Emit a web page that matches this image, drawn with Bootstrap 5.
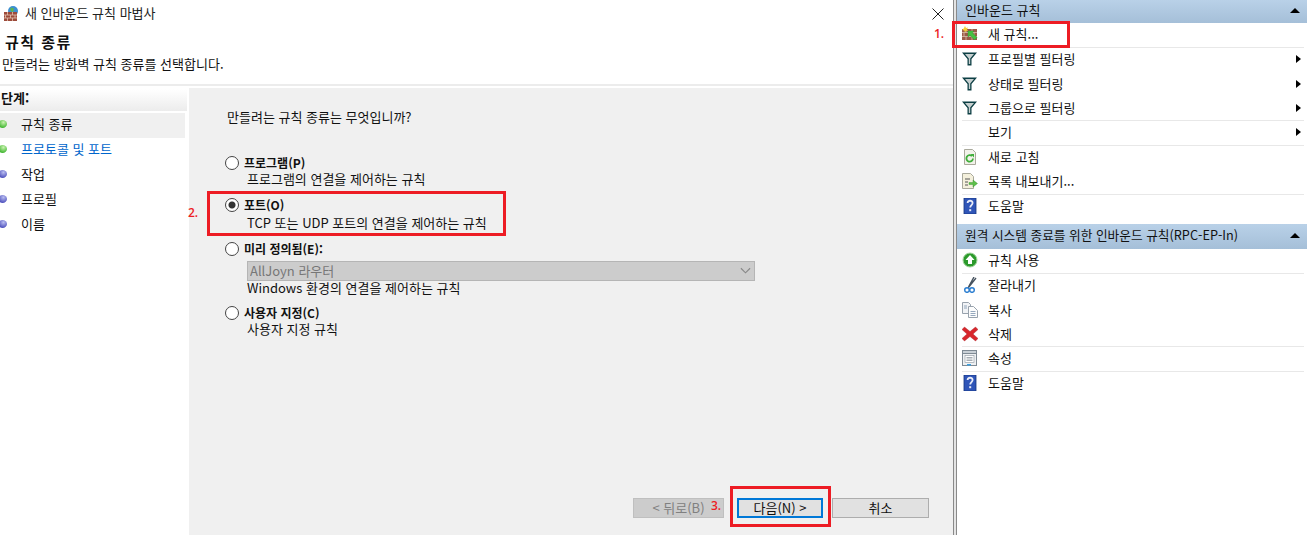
<!DOCTYPE html>
<html lang="ko">
  <head>
    <meta charset="UTF-8" />
    <meta name="viewport" content="width=device-width, initial-scale=1.0" />
    <title>새 인바운드 규칙 마법사</title>
    <link href="https://cdn.jsdelivr.net/npm/bootstrap@5.3.3/dist/css/bootstrap.min.css" rel="stylesheet" />
    <style>
      html, body { height: 535px; overflow: hidden; }
      body { font-family: "Noto Sans CJK KR", "Liberation Sans", sans-serif; font-size: 13px; line-height: 16px; color: #111; background: #fff; }
      .shell { width: 1307px; height: 535px; position: relative; }

      .wizard { width: 953px; }
      .title-row { height: 28px; padding-left: 3px; }
      .title-text { margin-left: 6px; margin-bottom: 2px; color: #222; }
      .close-x { margin-right: 9px; }
      .head-box { height: 58px; border-bottom: 2px solid #ececec; }
      .head-title { font-size: 15px; letter-spacing: 1.5px; font-weight: 700; line-height: 18px; padding: 5px 0 0 5px; }
      .head-sub { padding: 5px 0 0 2px; }

      .steps { width: 189px; padding-top: 3px; border-right: 2px solid #fff; }
      .steps-title { height: 22px; width: 187px; font-weight: 700; font-size: 13px; line-height: 18px; padding-left: 1px; background: linear-gradient(#fff, #ececec); margin-bottom: 2px; }
      .step-row { height: 25px; width: 185px; padding-left: 21px; padding-bottom: 4px; }
      .step-row.current { background: #f0f0f0; }
      .step-row.linked { color: #0066cc; }
      .step-dot { width: 9px; height: 8px; border-radius: 50%; margin-left: -23px; margin-right: 14px; flex: none; }
      .dot-green { background: radial-gradient(circle at 60% 30%, #c9f2b0, #3fb52f 70%); }
      .dot-blue { background: radial-gradient(circle at 60% 30%, #b9bdf0, #4d50bd 70%); }

      .main-pane { background: #f0f0f0; margin-top: 2px; padding: 21px 0 0 36px; width: 764px; height: 447px; }
      .ask { padding-left: 2px; margin-bottom: 30px; }
      .opt-line { height: 16px; }
      .opt-line .form-check-input { width: 14px; height: 14px; margin: 0 5px 0 0; flex: none; border: 1px solid #444; border-radius: 50%; background-color: #fff; box-shadow: none; }
      .opt-line .form-check-input:checked { background-color: #fff; background-image: radial-gradient(circle, #333 0 3px, transparent 4px); border-color: #444; }
      .opt-label { font-weight: 700; font-size: 12px; }
      .opt-desc { padding-left: 22px; height: 16px; }
      .desc-low { margin-top: 2px; }
      .desc-tight { margin-top: -1px; }
      .opt-gap { height: 10px; }
      .opt-gap-last { height: 9px; }
      .preset-select { width: 508px; height: 20px; margin: 4px 0 0 22px; padding: 0 6px 0 2px; font-size: 13px; line-height: 18px; border-radius: 0; border: 1px solid #b5b5b5; color: #777; font-family: inherit; background-image: url("data:image/svg+xml,%3csvg xmlns='http://www.w3.org/2000/svg' viewBox='0 0 12 8'%3e%3cpath d='M1 1l5 5 5-5' fill='none' stroke='%23888' stroke-width='1.2'/%3e%3c/svg%3e"); background-position: right 3px center; background-size: 11px 8px; }
      .preset-select:disabled { background-color: #ccc; color: #777; }

      .wiz-btns { position: absolute; left: 633px; top: 498px; }
      .wiz-btn { height: 20px; padding: 0; font-size: 13px; line-height: 16px; border-radius: 0; color: #111; background: #e1e1e1; border: 1px solid #adadad; font-family: inherit; }
      .wiz-btn:disabled { background: #ccc; color: #808080; border-color: #bfbfbf; opacity: 1; }
      .btn-back { width: 91px; }
      .btn-next { width: 86px; margin-left: 13px; border: 2px solid #0078d7; }
      .btn-cancel { width: 97px; margin-left: 9px; }

      .splitter { width: 4px; border-left: 1px solid #8a8a8a; border-right: 1px solid #8a8a8a; background: #e4e4e4; }

      .actions { width: 350px; }
      .act-head { height: 23px; padding: 0 7px 3px 8px; background: linear-gradient(#b9d1e8, #a5bfd8); color: #111; }
      .act-head.second { height: 25px; margin-top: 5px; font-size: 12.7px; }
      .act-list { padding-left: 5px; padding-right: 3px; }
      .act-row { height: 24.5px; padding-bottom: 1px; }
      .act-row.sep { border-bottom: 1px solid #e8e8e8; }
      .act-icon { width: 16px; height: 16px; margin-right: 10px; flex: none; }
      .act-text { flex-grow: 1; }
      .tri-right { width: 0; height: 0; border-left: 5px solid #000; border-top: 4px solid transparent; border-bottom: 4px solid transparent; margin-right: 3px; }
      .tri-up { width: 0; height: 0; border-bottom: 5px solid #000; border-left: 5px solid transparent; border-right: 5px solid transparent; }

      .mark-box { position: absolute; border: 3px solid #ed1c24; }
      .mark-num { position: absolute; color: #ed1c24; font-family: "Open Sans", sans-serif; font-weight: 600; font-size: 12px; line-height: 12px; }
      .box-one { left: 952px; top: 21px; width: 118px; height: 27px; }
      .box-two { left: 207px; top: 191px; width: 299px; height: 45px; }
      .box-three { left: 730px; top: 486px; width: 101px; height: 41px; }
      .num-one { left: 934px; top: 28px; }
      .num-two { left: 188px; top: 207px; }
      .num-three { left: 711px; top: 500px; }
    </style>
  </head>
  <body>
    <svg width="0" height="0" class="d-block">
      <defs>
        <symbol id="ico-funnel" viewBox="0 0 16 16">
          <path d="M0 1.500h15L9.500 8v6.500h-4V8z" fill="#0d3f44" />
          <path d="M3 3h9L8.200 7.600V13H6.800V7.600z" fill="#c7d0d0" />
        </symbol>
        <symbol id="ico-help" viewBox="0 0 16 16">
          <rect x="2" y="0" width="12" height="16" fill="#2f55b8" stroke="#16357f" stroke-width=".8" />
          <path d="M5.600 5c0-3 5-3 5 0 0 2-2.400 2.200-2.400 4.600" fill="none" stroke="#e8ecf8" stroke-width="1.800" />
          <rect x="7.200" y="11.200" width="2" height="2" fill="#e8ecf8" />
        </symbol>
      </defs>
    </svg>

    <div class="shell d-flex">
      <div class="wizard d-flex flex-column">
        <div class="title-row d-flex align-items-center">
          <svg width="16" height="16" viewBox="0 0 16 16">
            <circle cx="10" cy="5" r="5" fill="#3c8fd0" />
            <path d="M7.500 1.500l3.500 1-1 3.500-2.500-1z" fill="#5fb64a" />
            <rect x="1" y="6" width="13" height="9" fill="#9c4a3a" />
            <path d="M1 9h13M1 12h13M4.500 6v3M9.500 6v3M2.500 9v3M7.500 9v3M12 9v3M4.500 12v3M9.500 12v3" stroke="#e3c3b0" stroke-width=".8" fill="none" />
          </svg>
          <span class="title-text flex-grow-1">새 인바운드 규칙 마법사</span>
          <svg class="close-x" width="12" height="12" viewBox="0 0 12 12"><path d="M.5.5l11 11M11.500.5l-11 11" stroke="#222" stroke-width="1" fill="none" /></svg>
        </div>
        <div class="head-box">
          <div class="head-title">규칙 종류</div>
          <div class="head-sub">만들려는 방화벽 규칙 종류를 선택합니다.</div>
        </div>
        <div class="d-flex flex-grow-1">
          <div class="steps">
            <div class="steps-title">단계:</div>
            <div class="step-row current d-flex align-items-center"><span class="step-dot dot-green"></span>규칙 종류</div>
            <div class="step-row linked d-flex align-items-center"><span class="step-dot dot-green"></span>프로토콜 및 포트</div>
            <div class="step-row d-flex align-items-center"><span class="step-dot dot-blue"></span>작업</div>
            <div class="step-row d-flex align-items-center"><span class="step-dot dot-blue"></span>프로필</div>
            <div class="step-row d-flex align-items-center"><span class="step-dot dot-blue"></span>이름</div>
          </div>
          <div class="main-pane">
            <div class="ask">만들려는 규칙 종류는 무엇입니까?</div>
            <div>
              <div class="opt-line d-flex align-items-center"><input class="form-check-input" type="radio" name="ruleType" /><span class="opt-label">프로그램(P)</span></div>
              <div class="opt-desc">프로그램의 연결을 제어하는 규칙</div>
            </div>
            <div class="opt-gap"></div>
            <div>
              <div class="opt-line d-flex align-items-center"><input class="form-check-input" type="radio" name="ruleType" checked /><span class="opt-label">포트(O)</span></div>
              <div class="opt-desc desc-low">TCP 또는 UDP 포트의 연결을 제어하는 규칙</div>
            </div>
            <div class="opt-gap"></div>
            <div>
              <div class="opt-line d-flex align-items-center"><input class="form-check-input" type="radio" name="ruleType" /><span class="opt-label">미리 정의됨(E):</span></div>
              <select class="form-select preset-select d-block" disabled><option>AllJoyn 라우터</option></select>
              <div class="opt-desc desc-tight">Windows 환경의 연결을 제어하는 규칙</div>
            </div>
            <div class="opt-gap-last"></div>
            <div>
              <div class="opt-line d-flex align-items-center"><input class="form-check-input" type="radio" name="ruleType" /><span class="opt-label">사용자 지정(C)</span></div>
              <div class="opt-desc">사용자 지정 규칙</div>
            </div>
          </div>
        </div>
      </div>

      <div class="splitter"></div>

      <div class="actions">
        <div class="act-head d-flex align-items-center justify-content-between"><span>인바운드 규칙</span><span class="tri-up"></span></div>
        <div class="act-list">
          <div class="act-row sep d-flex align-items-center">
            <svg class="act-icon" viewBox="0 0 16 16">
              <rect x="0" y="3" width="15" height="11" fill="#9a5a48" />
              <path d="M0 6.500h15M0 10.500h15M4 3v3.500M10 3v3.500M2 6.500v4M7 6.500v4M12 6.500v4M4 10.500v3.500M10 10.500v3.500" stroke="#d9c0ae" stroke-width=".8" fill="none" />
              <path d="M3 0l1 2 2-.5-1 2 1 1.500-2-.2-1 1.700-.7-1.900L0 4l1.500-1.200z" fill="#f5cf3a" />
              <path d="M6 5h6l-1.500 1.800 4.500 4.700-2.500 2.500-4.500-4.700L6 11z" fill="#45c040" stroke="#2a8f30" stroke-width=".4" />
            </svg>
            <span class="act-text">새 규칙...</span>
          </div>
          <div class="act-row d-flex align-items-center"><svg class="act-icon"><use href="#ico-funnel" /></svg><span class="act-text">프로필별 필터링</span><span class="tri-right"></span></div>
          <div class="act-row d-flex align-items-center"><svg class="act-icon"><use href="#ico-funnel" /></svg><span class="act-text">상태로 필터링</span><span class="tri-right"></span></div>
          <div class="act-row sep d-flex align-items-center"><svg class="act-icon"><use href="#ico-funnel" /></svg><span class="act-text">그룹으로 필터링</span><span class="tri-right"></span></div>
          <div class="act-row sep d-flex align-items-center"><span class="act-icon"></span><span class="act-text">보기</span><span class="tri-right"></span></div>
          <div class="act-row d-flex align-items-center">
            <svg class="act-icon" viewBox="0 0 16 16">
              <path d="M2.500 .5h8l3 3v12h-11z" fill="#f2f2ea" stroke="#a9a99b" />
              <path d="M11 9.500a3.300 3.300 0 1 1-1-2.500" fill="none" stroke="#3fae3a" stroke-width="1.800" />
              <path d="M8.500 5h3.500v3.500z" fill="#3fae3a" />
            </svg>
            <span class="act-text">새로 고침</span>
          </div>
          <div class="act-row sep d-flex align-items-center">
            <svg class="act-icon" viewBox="0 0 16 16">
              <path d="M.5.5h8l3 3v12H.5z" fill="#f4f0dc" stroke="#a9a99b" />
              <path d="M3 6h5M3 9h3M3 12h3" stroke="#555" stroke-width="1" />
              <path d="M7 9.500h4V7l4.500 3.500-4.500 3.500v-2.500H7z" fill="#5fc04a" stroke="#2f8f2a" stroke-width=".4" />
            </svg>
            <span class="act-text">목록 내보내기...</span>
          </div>
          <div class="act-row d-flex align-items-center"><svg class="act-icon"><use href="#ico-help" /></svg><span class="act-text">도움말</span></div>
        </div>

        <div class="act-head second d-flex align-items-center justify-content-between"><span>원격 시스템 종료를 위한 인바운드 규칙(RPC-EP-In)</span><span class="tri-up"></span></div>
        <div class="act-list">
          <div class="act-row sep d-flex align-items-center">
            <svg class="act-icon" viewBox="0 0 16 16">
              <circle cx="8" cy="8" r="7" fill="#2b9a2b" stroke="#9fd39a" />
              <path d="M8 3l4.500 5H10v4H6V8H3.500z" fill="#fff" />
            </svg>
            <span class="act-text">규칙 사용</span>
          </div>
          <div class="act-row d-flex align-items-center">
            <svg class="act-icon" viewBox="0 0 16 16">
              <path d="M12 0L6.500 10M14 1L6 11" stroke="#46525e" stroke-width="1.400" fill="none" />
              <circle cx="5" cy="13" r="2.300" fill="none" stroke="#2d7fd1" stroke-width="1.500" />
              <circle cx="10" cy="13" r="2.300" fill="none" stroke="#2d7fd1" stroke-width="1.500" />
            </svg>
            <span class="act-text">잘라내기</span>
          </div>
          <div class="act-row d-flex align-items-center">
            <svg class="act-icon" viewBox="0 0 16 16">
              <path d="M.5.5h6l2 2v9h-8z" fill="#f1f3f6" stroke="#98a2ad" />
              <path d="M6.500 4.500h5l4 4v7h-9z" fill="#fdfdfd" stroke="#98a2ad" />
              <path d="M8.500 9.500h5M8.500 11.500h5M8.500 13.500h5M2 4h3M2 6h3" stroke="#7b93ad" stroke-width=".8" />
            </svg>
            <span class="act-text">복사</span>
          </div>
          <div class="act-row sep d-flex align-items-center">
            <svg class="act-icon" viewBox="0 0 16 16">
              <path d="M2.500 1L8 5.500 13.500 1 16 3.500 11 8l5 4.500-2.500 2.500L8 10.500 2.500 15 0 12.500 5 8 0 3.500z" fill="#d8262c" stroke="#a5262a" stroke-width=".4" />
            </svg>
            <span class="act-text">삭제</span>
          </div>
          <div class="act-row sep d-flex align-items-center">
            <svg class="act-icon" viewBox="0 0 16 16">
              <rect x=".5" y=".5" width="14" height="15" fill="#eef0f2" stroke="#7f8a94" />
              <rect x=".5" y=".5" width="14" height="3" fill="#c9d0d6" stroke="#7f8a94" />
              <rect x="3" y="5.500" width="9" height="7" fill="#fff" stroke="#9aa3ab" stroke-width=".7" />
              <path d="M4.500 7.500h6M4.500 9h6M4.500 10.500h6" stroke="#7f8a94" stroke-width=".7" />
              <rect x="5" y="14" width="4" height="1.500" fill="#3aa0e0" />
            </svg>
            <span class="act-text">속성</span>
          </div>
          <div class="act-row d-flex align-items-center"><svg class="act-icon"><use href="#ico-help" /></svg><span class="act-text">도움말</span></div>
        </div>
      </div>

      <div class="wiz-btns d-flex">
        <button type="button" class="btn wiz-btn btn-back" disabled>&lt; 뒤로(B)</button>
        <button type="button" class="btn wiz-btn btn-next">다음(N) &gt;</button>
        <button type="button" class="btn wiz-btn btn-cancel">취소</button>
      </div>

      <div class="mark-box box-one"></div>
      <div class="mark-box box-two"></div>
      <div class="mark-box box-three"></div>
      <span class="mark-num num-one">1.</span>
      <span class="mark-num num-two">2.</span>
      <span class="mark-num num-three">3.</span>
    </div>
    <script src="https://cdn.jsdelivr.net/npm/bootstrap@5.3.3/dist/js/bootstrap.bundle.min.js"></script>
  </body>
</html>
